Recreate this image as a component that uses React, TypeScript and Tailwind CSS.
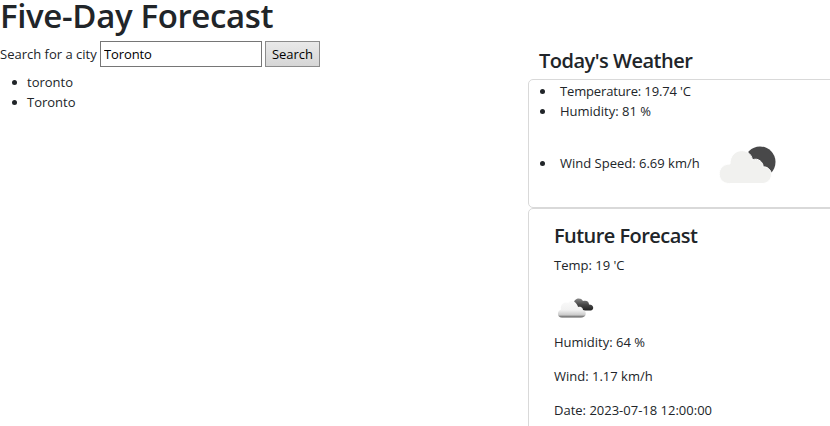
import type { ReactNode } from "react";

function Bullet({ children, className = "" }: { children: ReactNode; className?: string }) {
  return (
    <li className={`flex items-center ${className}`}>
      <span className="size-[5px] shrink-0 rounded-full bg-[#212529]" />
      {children}
    </li>
  );
}

function BrokenClouds() {
  return (
    <svg width="86" height="84" viewBox="0 1 86 84" className="-ml-[11px] shrink-0">
      <circle cx="55" cy="42" r="15.5" fill="#484849" />
      <g fill="#f1f1ef" stroke="#fff" strokeWidth="1">
        <path d="M24.5 63.5C10.500 63.500 11 44 25 44C25 28 45 26 47.500 40C53 37 59 43 58 47C62 46 66 50 66.500 54C66.500 60 62 63.500 57 63.500Z" />
      </g>
    </svg>
  );
}

function SmallClouds() {
  return (
    <svg width="43" height="43" viewBox="0 -1 43 43" className="block">
      <defs>
        <linearGradient id="front" x1="0" y1="0" x2="0" y2="1">
          <stop offset="0" stopColor="#fafafa" />
          <stop offset=".55" stopColor="#f1f1f1" />
          <stop offset=".84" stopColor="#cccccc" />
          <stop offset="1" stopColor="#555555" />
        </linearGradient>
        <linearGradient id="back" x1="0" y1="0" x2="0" y2="1">
          <stop offset="0" stopColor="#888888" />
          <stop offset=".5" stopColor="#484848" />
          <stop offset="1" stopColor="#222222" />
        </linearGradient>
      </defs>
      <path d="M20 16C20 11 27 10 29 14C33 13 35 15 35 17.500C40 17.500 40.500 22.500 37 23.500H27Z" fill="url(#back)" />
      <path d="M8 30.500C2.500 30.500 3 23.500 7 22.500C6 17 11 14.500 14 16C17 11.500 23 15 24 20C28 19 29 22 29 23C33 24 33 30.500 27 30.500Z" fill="url(#front)" />
    </svg>
  );
}

export default function App() {
  return (
    <div className="h-[426px] overflow-hidden bg-white font-['Open_Sans','Noto_Sans',sans-serif] text-[13px] leading-[20px] text-[#212529]">
      <h1 className="h-[39px] text-[33px] leading-[32px] font-semibold tracking-[-0.35px] whitespace-nowrap">
        Five-Day Forecast
      </h1>
      <div className="flex items-start justify-between">
        <div>
          <div className="flex h-[33px] items-center pb-[3px]">
            <label htmlFor="city" className="w-[100px] whitespace-nowrap">Search for a city</label>
            <input
              id="city"
              defaultValue="Toronto"
              className="h-[26px] w-[162px] border border-[#767676] bg-white px-[3px] tracking-[-0.1px] text-black"
            />
            <button className="ml-[3px] h-[26px] w-[55px] border border-[#8b8b8b] bg-gradient-to-b from-[#e9e9e9] to-[#d6d6d6] text-black">
              Search
            </button>
          </div>
          <ul className="pl-[12px]">
            <Bullet className="gap-[10px]">toronto</Bullet>
            <Bullet className="gap-[10px]">Toronto</Bullet>
          </ul>
        </div>
        <div className="w-[302px]">
          <h2 className="h-[40px] pt-[9px] pl-[11px] text-[20px] leading-[26px] font-semibold tracking-[-0.5px]">
            Today's Weather
          </h2>
          <ul className="-mr-2 h-[129px] rounded-[5px] border border-[#d9d9d9] pt-[1px] pl-[11px]">
            <Bullet className="gap-[15px] tracking-[-0.15px]">Temperature: 19.74 'C</Bullet>
            <Bullet className="gap-[15px]">Humidity: 81 %</Bullet>
            <Bullet className="gap-[15px]">
              <span className="w-[141px] whitespace-nowrap">Wind Speed: 6.69 km/h</span>
              <BrokenClouds />
            </Bullet>
          </ul>
          <section className="-mr-2 h-[300px] rounded-[5px] border border-[#d9d9d9] pt-[14px] pl-[25px]">
            <h2 className="h-[32px] text-[20px] leading-[26px] font-semibold tracking-[-0.55px]">Future Forecast</h2>
            <p className="mb-[11px]">Temp: 19 'C</p>
            <SmallClouds />
            <p className="mt-[3px] mb-[14px]">Humidity: 64 %</p>
            <p className="mb-[14px]">Wind: 1.17 km/h</p>
            <p>Date: 2023-07-18 12:00:00</p>
          </section>
        </div>
      </div>
    </div>
  );
}
